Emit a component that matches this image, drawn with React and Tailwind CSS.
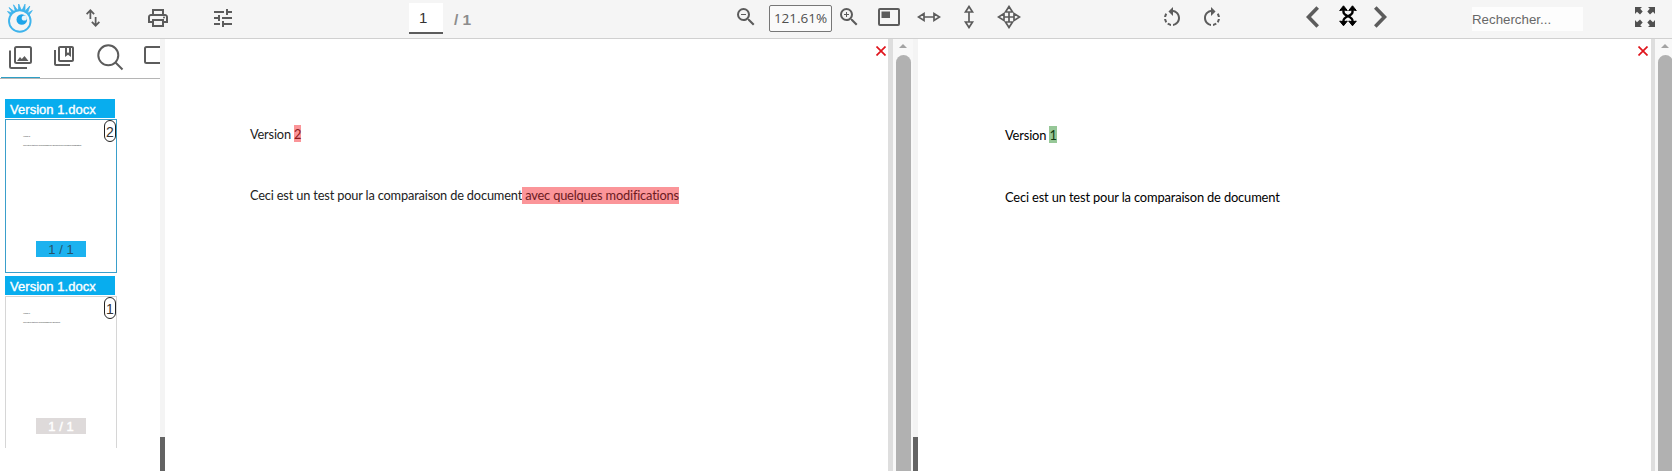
import React from "react";
import {
  MdOutlinePrint,
  MdTune,
  MdOutlineCollectionsBookmark,
  MdOutlineZoomOut,
  MdOutlineZoomIn,
  MdRotateLeft,
  MdRotateRight,
} from "react-icons/md";

const Logo = () => (
  <svg className="ml-1.5 mt-[3px] shrink-0" width="28" height="31" viewBox="0 0 28 31" fill="none">
    <circle cx="13.800" cy="18" r="10.800" stroke="#3fb4ec" strokeWidth="1.900" />
    <path
      d="M4.500 12 1.500 8.500l5 1.400M6.500 10 3 4.500l5.600 4.300M9.500 8.500 7.500 1.800l4.200 5.600M12.500 7.500l.2-6.500 2.600 6.300M16 7.500 19 1.200v6.600M18.800 8.500l5-5.500-2.200 6.800M21.300 10.500l5-3-3.600 5.200"
      stroke="#3fb4ec"
      fill="#3fb4ec"
      strokeWidth=".8"
      strokeLinejoin="round"
    />
    <circle cx="15.800" cy="16.500" r="5.300" fill="#1fa5ea" />
    <circle cx="18.300" cy="15" r="2.600" fill="#e8f5fc" />
  </svg>
);

const SwapIcon = () => (
  <svg className="ml-[52px] mt-[9px] shrink-0" width="14" height="18" viewBox="160 -880 640 800" preserveAspectRatio="none" fill="#5c5c5c">
    <path d="M320-440v-287L217-624l-57-56 200-200 200 200-57 56-103-103v287h-80ZM600-80 400-280l57-56 103 103v-287h80v287l103-103 57 56L600-80Z" />
  </svg>
);

const FitPageIcon = () => (
  <svg className="ml-[17px] mt-2 shrink-0" width="22" height="18" viewBox="0 0 22 18">
    <rect x="1" y="1" width="20" height="16" rx="1" fill="none" stroke="#5c5c5c" strokeWidth="2" />
    <rect x="3.500" y="3.500" width="8.500" height="6.500" fill="#5c5c5c" />
  </svg>
);

const WidthIcon = () => (
  <svg className="ml-[17px] mt-[5px] shrink-0" width="24" height="24" viewBox="0 0 24 24" fill="none" stroke="#5c5c5c" strokeWidth="1.700">
    <path d="M7 12h10M7 8.500v7L1.500 12zM17 8.500v7l5.500-3.500z" />
  </svg>
);

const HeightIcon = () => (
  <svg className="ml-4 mt-[5px] shrink-0" width="24" height="24" viewBox="0 0 24 24" fill="none" stroke="#5c5c5c" strokeWidth="1.700">
    <path d="M12 7v10M8.500 7h7L12 1.500zM8.500 17h7L12 22.500z" />
  </svg>
);

const MoveIcon = () => (
  <svg className="ml-4 mt-[5px] shrink-0" width="24" height="24" viewBox="0 0 24 24" fill="none" stroke="#5c5c5c" strokeWidth="1.700">
    <path d="M7 12h10M12 7v10M7 8.500v7L1.500 12zM17 8.500v7l5.500-3.500zM8.500 7h7L12 1.500zM8.500 17h7L12 22.500z" />
  </svg>
);

const ShuffleIcon = () => (
  <svg className="ml-[19px] mt-[5px] shrink-0" width="20" height="22" viewBox="0 0 20 22">
    <path d="M5.500 4v3c0 4.500 9 4 9 8.500V18M14.500 4v3c0 4.500-9 4-9 8.500V18" fill="none" stroke="#000" strokeWidth="2.400" />
    <path d="M5.500.8 9.300 5.500 5.500 4.900 1.700 5.500zM14.500.8l3.800 4.700-3.800-.6-3.800.6zM5.500 20.800l3.800-4.700-3.800.6-3.800-.6zM14.500 20.800l3.800-4.700-3.800.6-3.800-.6z" fill="#000" stroke="#000" strokeWidth="1" strokeLinejoin="round" />
  </svg>
);

const ExpandIcon = () => (
  <svg className="ml-[52px] mt-[7px] shrink-0" width="20" height="20" viewBox="0 0 20 20" fill="#505050">
    <path d="M0 0h7L5.200 1.800l2.500 2.800-2.700 2.800-3-2.600L0 7zM20 0h-7l1.800 1.800-2.500 2.800 2.700 2.800 3-2.600L20 7zM0 20h7l-1.800-1.800 2.500-2.800-2.700-2.800-3 2.600L0 13zM20 20h-7l1.800-1.800-2.500-2.800 2.700-2.800 3 2.600L20 13z" />
  </svg>
);

function Toolbar() {
  return (
    <header className="flex h-[39px] w-full shrink-0 items-start border-b border-[#d0d0d0] bg-[#f5f5f5] text-[#5c5c5c]">
      <Logo />
      <SwapIcon />
      <MdOutlinePrint className="ml-[46px] mt-1.5 shrink-0" size={24} />
      <MdTune className="ml-[41px] mt-1.5 shrink-0" size={24} />
      <div className="ml-[174px] mt-[3px] flex h-[31px] w-[34px] shrink-0 items-center border-b-2 border-[#5c5c5c] bg-white pl-[10px] pt-0.5 text-[15px] text-[#333]">
        1
      </div>
      <div className="ml-[11px] mt-2 w-[30px] shrink-0 text-[15.500px] leading-[23px] font-bold text-[#8c8c8c]">/ 1</div>
      <MdOutlineZoomOut className="ml-[250px] mt-[5px] shrink-0" size={24} />
      <div className="ml-[11px] mt-[5px] flex h-[27px] w-[63px] shrink-0 items-center justify-center rounded-xs border border-[#777] bg-[#fafafa] font-['Open_Sans',sans-serif] text-[13.500px] tracking-[-0.02px] text-[#505050]">
        121.61%
      </div>
      <MdOutlineZoomIn className="ml-[5px] mt-[5px] shrink-0" size={24} />
      <FitPageIcon />
      <WidthIcon />
      <HeightIcon />
      <MoveIcon />
      <MdRotateLeft className="ml-[139px] mt-1.5 shrink-0" size={24} />
      <MdRotateRight className="ml-4 mt-1.5 shrink-0" size={24} />
      <svg className="ml-[82px] mt-1.5 shrink-0" width="13" height="22" viewBox="0 0 13 22" fill="none" stroke="#5c5c5c" strokeWidth="3.600">
        <path d="M11.700 1.500 2.500 11l9.200 9.500" />
      </svg>
      <ShuffleIcon />
      <svg className="ml-4 mt-1.5 shrink-0" width="13" height="22" viewBox="0 0 13 22" fill="none" stroke="#5c5c5c" strokeWidth="3.600">
        <path d="M1.300 1.500 10.500 11l-9.200 9.500" />
      </svg>
      <div className="ml-[85px] mt-[7px] flex h-6 w-[111px] shrink-0 items-center bg-[#fdfdfd] pt-0.5 text-[13.300px] text-[#686868]">Rechercher...</div>
      <ExpandIcon />
    </header>
  );
}

function Tabs() {
  return (
    <nav className="flex h-10 w-full shrink-0 items-start overflow-hidden border-b border-[#b5b5b5] text-[#5c5c5c]">
      <div className="ml-px flex h-10 w-[39px] shrink-0 items-start border-b-2 border-[#2d9fc5] pl-2 pt-[7px]">
        <svg width="23" height="23" viewBox="0 0 23 23" fill="none">
          <rect x="6" y="1" width="16" height="16" rx="1.500" stroke="#5c5c5c" strokeWidth="2" />
          <path d="M1 4.500V20.500c0 1 .5 1.500 1.500 1.500H18" stroke="#5c5c5c" strokeWidth="2" />
          <path d="m8 15 3-4 1.800 2L15.500 10l4 5z" fill="#5c5c5c" />
        </svg>
      </div>
      <MdOutlineCollectionsBookmark className="ml-3 mt-[5px] shrink-0" size={24} />
      <svg className="ml-[21px] mt-[5px] shrink-0" width="27" height="27" viewBox="0 0 27 27" fill="none" stroke="#5c5c5c" strokeWidth="2">
        <circle cx="11.300" cy="11.300" r="10" />
        <path d="m18.500 18.500 7 7" />
      </svg>
      <svg className="ml-5 mt-[7px] shrink-0" width="26" height="18" viewBox="0 0 26 18" fill="none">
        <rect x="1" y="1" width="24" height="16" rx="1.500" stroke="#5c5c5c" strokeWidth="2" />
      </svg>
    </nav>
  );
}

function Thumbnail({ title, count, lines, active }) {
  return (
    <section className="flex flex-col">
      <h2 className="flex h-[19px] w-[110px] items-center bg-[#08adee] pl-[5px] pt-0.5 text-[13px] tracking-[0.04px] text-white [-webkit-text-stroke:0.35px_white]">{title}</h2>
      <div
        className={
          active
            ? "relative mt-px flex h-[154px] w-[112px] flex-col border border-[#3a9fcb]"
            : "relative mt-px flex h-[152px] w-[112px] flex-col border border-b-0 border-[#d6d6d6]"
        }
      >
        <div className="flex flex-col gap-[6px] pl-[17px] pt-[15px] text-[2px] leading-[3px] tracking-[-0.16px] text-[#444]">
          {lines.map((line) => (
            <p key={line} className="whitespace-nowrap">{line}</p>
          ))}
        </div>
        <span className="absolute right-0 top-0 flex h-[22px] w-3 items-center justify-center rounded-full border border-[#222] bg-white pt-0.5 text-[14px] text-[#333]">
          {count}
        </span>
        <div
          className={
            active
              ? "ml-[30px] mt-[94px] flex h-4 w-[50px] items-center justify-center bg-[#1cb2ef] pt-0.5 text-[13px] text-[#27546a]"
              : "ml-[30px] mt-[94px] flex h-4 w-[50px] items-center justify-center bg-[#dedada] pt-0.5 text-[13px] text-white [-webkit-text-stroke:0.4px_white]"
          }
        >
          1 / 1
        </div>
      </div>
    </section>
  );
}

const CloseIcon = () => (
  <svg className="mr-0.5 mt-[7px] shrink-0" width="10" height="10" viewBox="0 0 10 10" stroke="#e0141c" strokeWidth="1.700">
    <path d="m.5.5 9 9M9.500.5l-9 9" />
  </svg>
);

function Splitter() {
  return (
    <div className="flex w-[5px] shrink-0 flex-col justify-end bg-[#f4f4f4]">
      <div className="h-[34px] bg-[#636363]" />
    </div>
  );
}

function Scrollbar({ wide }) {
  return (
    <>
      <div className={wide ? "w-[5px] shrink-0 bg-[#dedede]" : "w-1 shrink-0 bg-[#dedede]"} />
      <div className={wide ? "flex w-5 shrink-0 flex-col bg-[#f8f8f8] pl-[3px]" : "flex w-[17px] shrink-0 flex-col overflow-hidden bg-[#f8f8f8] pl-[3px]"}>
        <svg className="ml-[3px] mt-[5px] shrink-0" width="8" height="4" viewBox="0 0 8 4" fill="#a3a3a3">
          <path d="M0 4 4 0l4 4z" />
        </svg>
        <div className="mt-[7px] w-[15px] flex-1 rounded-t-full bg-[#b1b1b1]" />
      </div>
    </>
  );
}

export default function App() {
  return (
    <div className="flex h-[471px] w-[1672px] flex-col overflow-hidden bg-white font-['Liberation_Sans',sans-serif]">
      <Toolbar />
      <div className="flex min-h-0 flex-1">
        <aside className="flex w-40 shrink-0 flex-col overflow-hidden">
          <Tabs />
          <div className="flex flex-col gap-[3px] pl-[5px] pt-5">
            <Thumbnail
              title="Version 1.docx"
              count={2}
              active
              lines={["Version 2", "Ceci est un test pour la comparaison de document avec quelques modifications"]}
            />
            <Thumbnail title="Version 1.docx" count={1} lines={["Version 1", "Ceci est un test pour la comparaison de document"]} />
          </div>
        </aside>
        <Splitter />
        <main className="flex w-[723px] shrink-0 justify-between">
          <article className="pl-[85px] pt-[86px] font-[Lato,sans-serif] text-[12.800px] leading-[17px] tracking-[-0.17px] whitespace-pre text-[#222]">
            <p className="flex">
              <span className="pt-px">Version </span>
              <mark className="h-[17px] bg-[#fb9599] pt-px text-[#8c1a20]">2</mark>
            </p>
            <p className="mt-[44px] flex">
              <span>Ceci est un test pour la comparaison de document</span>
              <mark className="h-[17px] bg-[#fb9599] text-[#6b1a1e]"> avec quelques modifications</mark>
            </p>
          </article>
          <CloseIcon />
        </main>
        <Scrollbar wide />
        <Splitter />
        <main className="flex w-[733px] shrink-0 justify-between pr-px">
          <article className="pl-[87px] pt-[87px] font-[Lato,sans-serif] text-[12.900px] leading-[17px] tracking-[-0.16px] whitespace-pre text-black">
            <p className="flex">
              <span className="pt-px">Version </span>
              <mark className="h-[17px] bg-[#96c797] pt-px text-[#123c14]">1</mark>
            </p>
            <p className="mt-[45px]">Ceci est un test pour la comparaison de document</p>
          </article>
          <CloseIcon />
        </main>
        <Scrollbar />
      </div>
    </div>
  );
}
